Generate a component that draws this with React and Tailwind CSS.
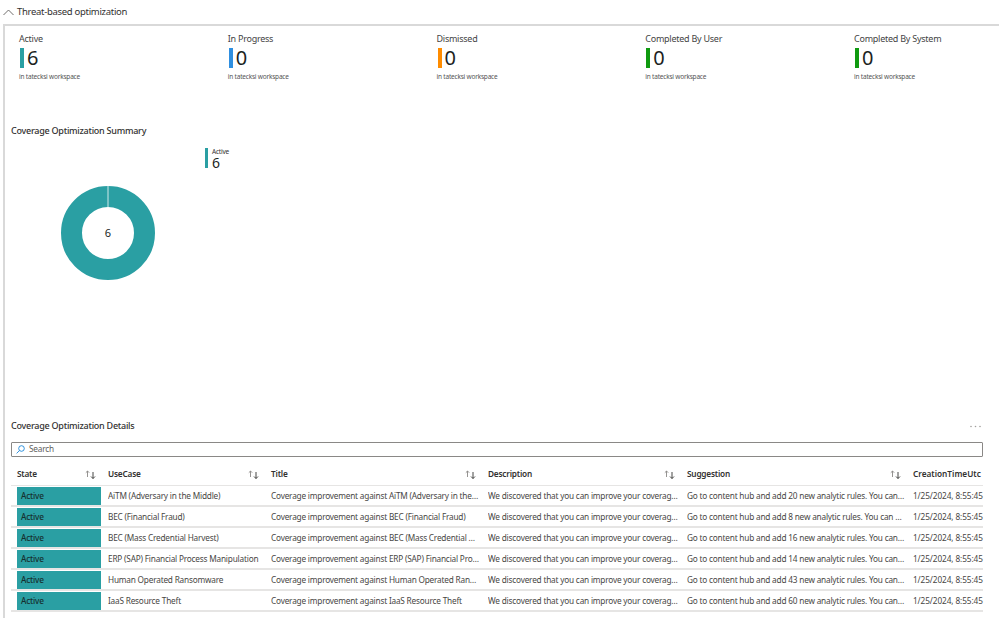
const FONT = "font-['Noto_Sans',_'Open_Sans',_sans-serif]";

const cards = [
  { label: 'Active', value: 6, color: 'bg-[#2a9fa3]' },
  { label: 'In Progress', value: 0, color: 'bg-[#2f8fe0]' },
  { label: 'Dismissed', value: 0, color: 'bg-[#ff8c00]' },
  { label: 'Completed By User', value: 0, color: 'bg-[#0f9a0f]' },
  { label: 'Completed By System', value: 0, color: 'bg-[#0f9a0f]' },
];

const rows = [
  ['AiTM (Adversary in the Middle)', 20],
  ['BEC (Financial Fraud)', 8],
  ['BEC (Mass Credential Harvest)', 16],
  ['ERP (SAP) Financial Process Manipulation', 14],
  ['Human Operated Ransomware', 43],
  ['IaaS Resource Theft', 60],
];

const GRID = 'grid grid-cols-[97px_163px_217px_199px_226px_70px]';

const SortIcon = () => (
  <svg width="11" height="9" viewBox="0 0 11 9" fill="none" className="shrink-0">
    <path d="M2.5 7V1M.8 2.7 2.5 1l1.7 1.7" stroke="#8a8886" strokeWidth=".9" />
    <path d="M8 2v6.5M6 6.5l2 2 2-2" stroke="#323130" strokeWidth=".9" />
  </svg>
);

const Head = ({ label, sort = true, first }) => (
  <div className={`flex items-center justify-between ${sort ? 'pr-3 tracking-[-0.2px]' : ''} ${first ? 'pl-[6px]' : ''}`}>
    <span className="font-semibold whitespace-nowrap">{label}</span>
    {sort && <SortIcon />}
  </div>
);

const StatCard = ({ label, value, color }) => (
  <div className="w-[208.75px] shrink-0">
    <div className="text-[9px] leading-[14px] tracking-[-0.25px] text-[#444]">{label}</div>
    <div className="flex items-center h-[22px] mt-px ml-px">
      <div className={`w-1 h-5 ${color}`} />
      <span className="ml-[3px] text-[20px] leading-none text-[#201f1e]">{value}</span>
    </div>
    <div className="text-[6.5px] leading-[10px] mt-[3px] tracking-[-0.2px] text-[#555]">in tatecksi workspace</div>
  </div>
);

const Donut = () => (
  <div className="relative w-[94px] h-[94px] ml-[50px] mt-[38px] shrink-0">
    <svg width="94" height="94" viewBox="0 0 94 94">
      <circle cx="47" cy="47" r="36.5" fill="none" stroke="#2a9fa3" strokeWidth="21" />
      <line x1="47" y1="0" x2="47" y2="21" stroke="#cfe9ea" strokeWidth="1" />
    </svg>
    <div className="absolute inset-0 flex items-center justify-center text-[11px] text-[#201f1e]">6</div>
  </div>
);

const Row = ({ useCase, count }) => (
  <div className={`${GRID} h-[21px] items-center border-b-2 border-[#e6e5e4] text-[8.25px] tracking-[-0.2px] text-[#484644]`}>
    <div className="pl-[6px] pr-[7px]">
      <div className="h-[18px] flex items-center pl-1 pt-px bg-[#2a9fa3] text-[#16302f] font-medium">Active</div>
    </div>
    <div className="truncate pr-2 pt-px">{useCase}</div>
    <div className="truncate pr-2 pt-px">Coverage improvement against {useCase}</div>
    <div className="truncate pr-2 pt-px">We discovered that you can improve your coverage against this threat</div>
    <div className="truncate pr-2 pt-px">Go to content hub and add {count} new analytic rules. You can also review the list</div>
    <div className="whitespace-nowrap pt-px tracking-[-0.1px]">1/25/2024, 8:55:45</div>
  </div>
);

export default function App() {
  return (
    <div className={`w-[999px] h-[618px] overflow-hidden bg-white ${FONT}`}>
      <div className="h-6 flex items-center pl-[3px] pt-[1px] text-[9.5px] tracking-[-0.3px] text-[#323130]">
        <svg width="11" height="7" viewBox="0 0 11 7" fill="none">
          <path d="M.5 6 5.5 1l5 5" stroke="#605e5c" strokeWidth=".9" />
        </svg>
        <span className="ml-[3px]">Threat-based optimization</span>
      </div>

      <div className="ml-[3px] h-[594px] border-l-2 border-t-2 border-[#d9d9d9]">
        <div className="flex pl-[14px] pt-[6px] h-[91px]">
          {cards.map((c) => (
            <StatCard key={c.label} {...c} />
          ))}
        </div>

        <div className="pl-[6px] w-[978px]">
          <h2 className="h-[12px] mt-[8px] text-[9px] leading-[12px] tracking-[-0.25px] font-medium text-[#323130]">Coverage Optimization Summary</h2>

          <div className="flex h-[272px] mt-[11px]">
            <Donut />
            <div className="flex ml-[50px] h-5 shrink-0">
              <div className="w-[3px] h-5 bg-[#2a9fa3]" />
              <div className="ml-1">
                <div className="text-[6.5px] leading-[8px] tracking-[-0.2px] text-[#323130]">Active</div>
                <div className="text-[14px] leading-[14px] text-[#201f1e]">6</div>
              </div>
            </div>
          </div>

          <div className="flex items-center justify-between h-[12px] text-[9px] tracking-[-0.25px] font-medium text-[#323130]">
            <h2 className="leading-[12px]">Coverage Optimization Details</h2>
            <svg width="11" height="3" viewBox="0 0 11 3" fill="#a19f9d" className="mr-[2px]">
              <circle cx="1" cy="1.5" r=".8" />
              <circle cx="5.5" cy="1.5" r=".8" />
              <circle cx="10" cy="1.5" r=".8" />
            </svg>
          </div>

          <div className="flex items-center h-[15px] mt-[10px] border border-[#8a8886] rounded-[1px] pl-1 text-[8.25px] tracking-[-0.2px] text-[#605e5c]">
            <svg width="9" height="9" viewBox="0 0 9 9" fill="none">
              <circle cx="5.5" cy="3.5" r="2.8" stroke="#0078d4" strokeWidth=".8" />
              <path d="M3.4 5.6.6 8.4" stroke="#0078d4" strokeWidth=".8" />
            </svg>
            <span className="ml-1">Search</span>
          </div>

          <div className={`${GRID} h-[29px] pt-[6px] items-center border-b border-[#e6e5e4] text-[8.25px] text-[#323130]`}>
            <Head label="State" first />
            <Head label="UseCase" />
            <Head label="Title" />
            <Head label="Description" />
            <Head label="Suggestion" />
            <Head label="CreationTimeUtc" sort={false} />
          </div>

          {rows.map(([useCase, count]) => (
            <Row key={useCase} useCase={useCase} count={count} />
          ))}
        </div>
      </div>
    </div>
  );
}
